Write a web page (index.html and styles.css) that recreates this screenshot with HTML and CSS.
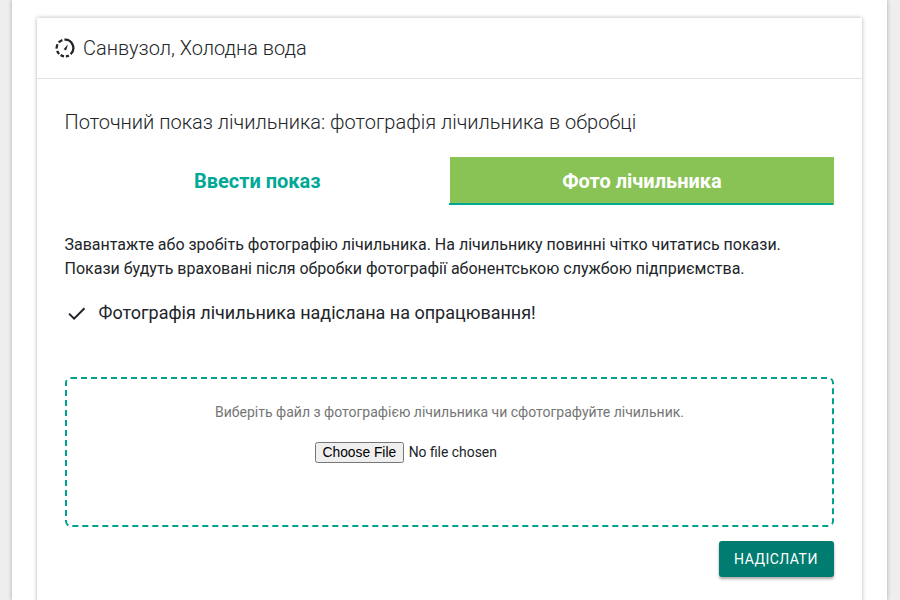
FILE: index.html
```html
<!DOCTYPE html>
<html lang="uk">
<head>
<meta charset="utf-8">
<title>Показ лічильника</title>
<link rel="stylesheet" href="styles.css">
</head>
<body>
<main class="page">
  <section class="card">
    <header class="card-head">
      <svg class="gauge" width="20" height="20" viewBox="0 0 20 20" fill="none" stroke="#212529" stroke-width="2.3">
        <path d="M9.4 1.7 A8.3 8.3 0 0 1 15.6 16.1 M13.9 17.4 A8.3 8.3 0 0 1 10.8 18.3 M9 18.3 A8.3 8.3 0 0 1 5.6 17 M4.2 16 A8.3 8.3 0 0 1 2.2 12.8 M1.7 10.6 A8.3 8.3 0 0 1 2.6 6.2 M3.7 4.6 A8.3 8.3 0 0 1 7.4 2.1"/>
        <path d="M8.6 11.2 L13 6.3 L11.1 12.5 Z" fill="#212529" stroke="none"/>
      </svg>
      <h1 class="card-title">Санвузол, Холодна вода</h1>
    </header>
    <div class="card-body">
      <h2 class="status">Поточний показ лічильника: фотографія лічильника в обробці</h2>
      <div class="tabs">
        <a class="tab">Ввести показ</a>
        <a class="tab tab-active">Фото лічильника</a>
      </div>
      <p class="lead">Завантажте або зробіть фотографію лічильника. На лічильнику повинні чітко читатись покази.<br>Покази будуть враховані після обробки фотографії абонентською службою підприємства.</p>
      <div class="notice">
        <svg class="check" width="24" height="24" viewBox="0 0 24 24" fill="none" stroke="#212529" stroke-width="2"><path d="M4 12.6 L9.1 17.7 L19.5 7.3"/></svg>
        <span>Фотографія лічильника надіслана на опрацювання!</span>
      </div>
      <div class="drop">
        <p class="drop-hint">Виберіть файл з фотографією лічильника чи сфотографуйте лічильник.</p>
        <input class="file" type="file">
      </div>
      <div class="actions">
        <button class="send" type="button">Надіслати</button>
      </div>
    </div>
  </section>
</main>
</body>
</html>
```
FILE: styles.css
```css
html, body {
  margin: 0;
  height: 600px;
  overflow: hidden;
  background: #eeeeee;
  font-family: Roboto, "Liberation Sans", sans-serif;
  color: #212529;
}
.page {
  width: 875px;
  height: 600px;
  margin: 0 0 0 12px;
  padding: 18px 25px 0;
  box-sizing: border-box;
  background: #fff;
  box-shadow: 0 0 4px rgba(0, 0, 0, .3);
  overflow: hidden;
}
.card {
  height: 640px;
  background: #fff;
  box-shadow: 0 0 4px rgba(0, 0, 0, .3);
}
.card-head {
  display: flex;
  align-items: center;
  gap: 8px;
  height: 61px;
  padding: 0 18px;
  box-sizing: border-box;
  border-bottom: 1px solid #dee2e6;
}
.gauge { flex: none; }
.card-title {
  margin: 0;
  font-size: 20px;
  font-weight: 300;
  line-height: 24px;
}
.card-body { padding: 30px 28.5px 0 27.5px; }
.status {
  margin: 0;
  font-size: 20px;
  font-weight: 300;
  line-height: 26px;
}
.tabs {
  display: grid;
  grid-template-columns: 1fr 1fr;
  margin-top: 22px;
}
.tab {
  display: flex;
  align-items: center;
  justify-content: center;
  height: 48px;
  padding-left: 1px;
  font-size: 20px;
  font-weight: 700;
  color: #00a896;
}
.tab-active {
  position: relative;
  margin-left: .5px;
  background: #8ac355;
  color: #fff;
}
.tab-active::after {
  content: "";
  position: absolute;
  left: -1px;
  right: 1px;
  bottom: 0;
  height: 2px;
  background: #00a896;
}
.lead {
  margin: 28px 0 0;
  font-size: 16px;
  line-height: 24px;
}
.notice {
  display: flex;
  align-items: center;
  gap: 10px;
  margin-top: 20px;
  font-size: 18px;
  line-height: 24px;
}
.drop {
  height: 150px;
  margin-top: 52px;
  box-sizing: border-box;
  border: 2px dashed #00a08e;
  border-radius: 6px;
  padding-top: 23px;
  text-align: center;
}
.drop-hint {
  margin: 0;
  padding-left: 1px;
  font-size: 14px;
  line-height: 21px;
  color: #757575;
}
.file {
  display: block;
  width: 253px;
  margin: 19px auto 0 248px;
  font-family: Roboto, "Liberation Sans", sans-serif;
  font-size: 13.9px;
}
.file::file-selector-button {
  font-size: 13.8px;
  margin-right: 4.5px;
}
.actions {
  display: flex;
  justify-content: flex-end;
  margin-top: 14px;
}
.send {
  width: 115px;
  height: 36px;
  border: 0;
  border-radius: 3px;
  background: #007c70;
  color: #fff;
  font-family: Roboto, "Liberation Sans", sans-serif;
  font-size: 14px;
  letter-spacing: .5px;
  text-transform: uppercase;
  box-shadow: 0 2px 3px rgba(0, 0, 0, .35);
}
```
